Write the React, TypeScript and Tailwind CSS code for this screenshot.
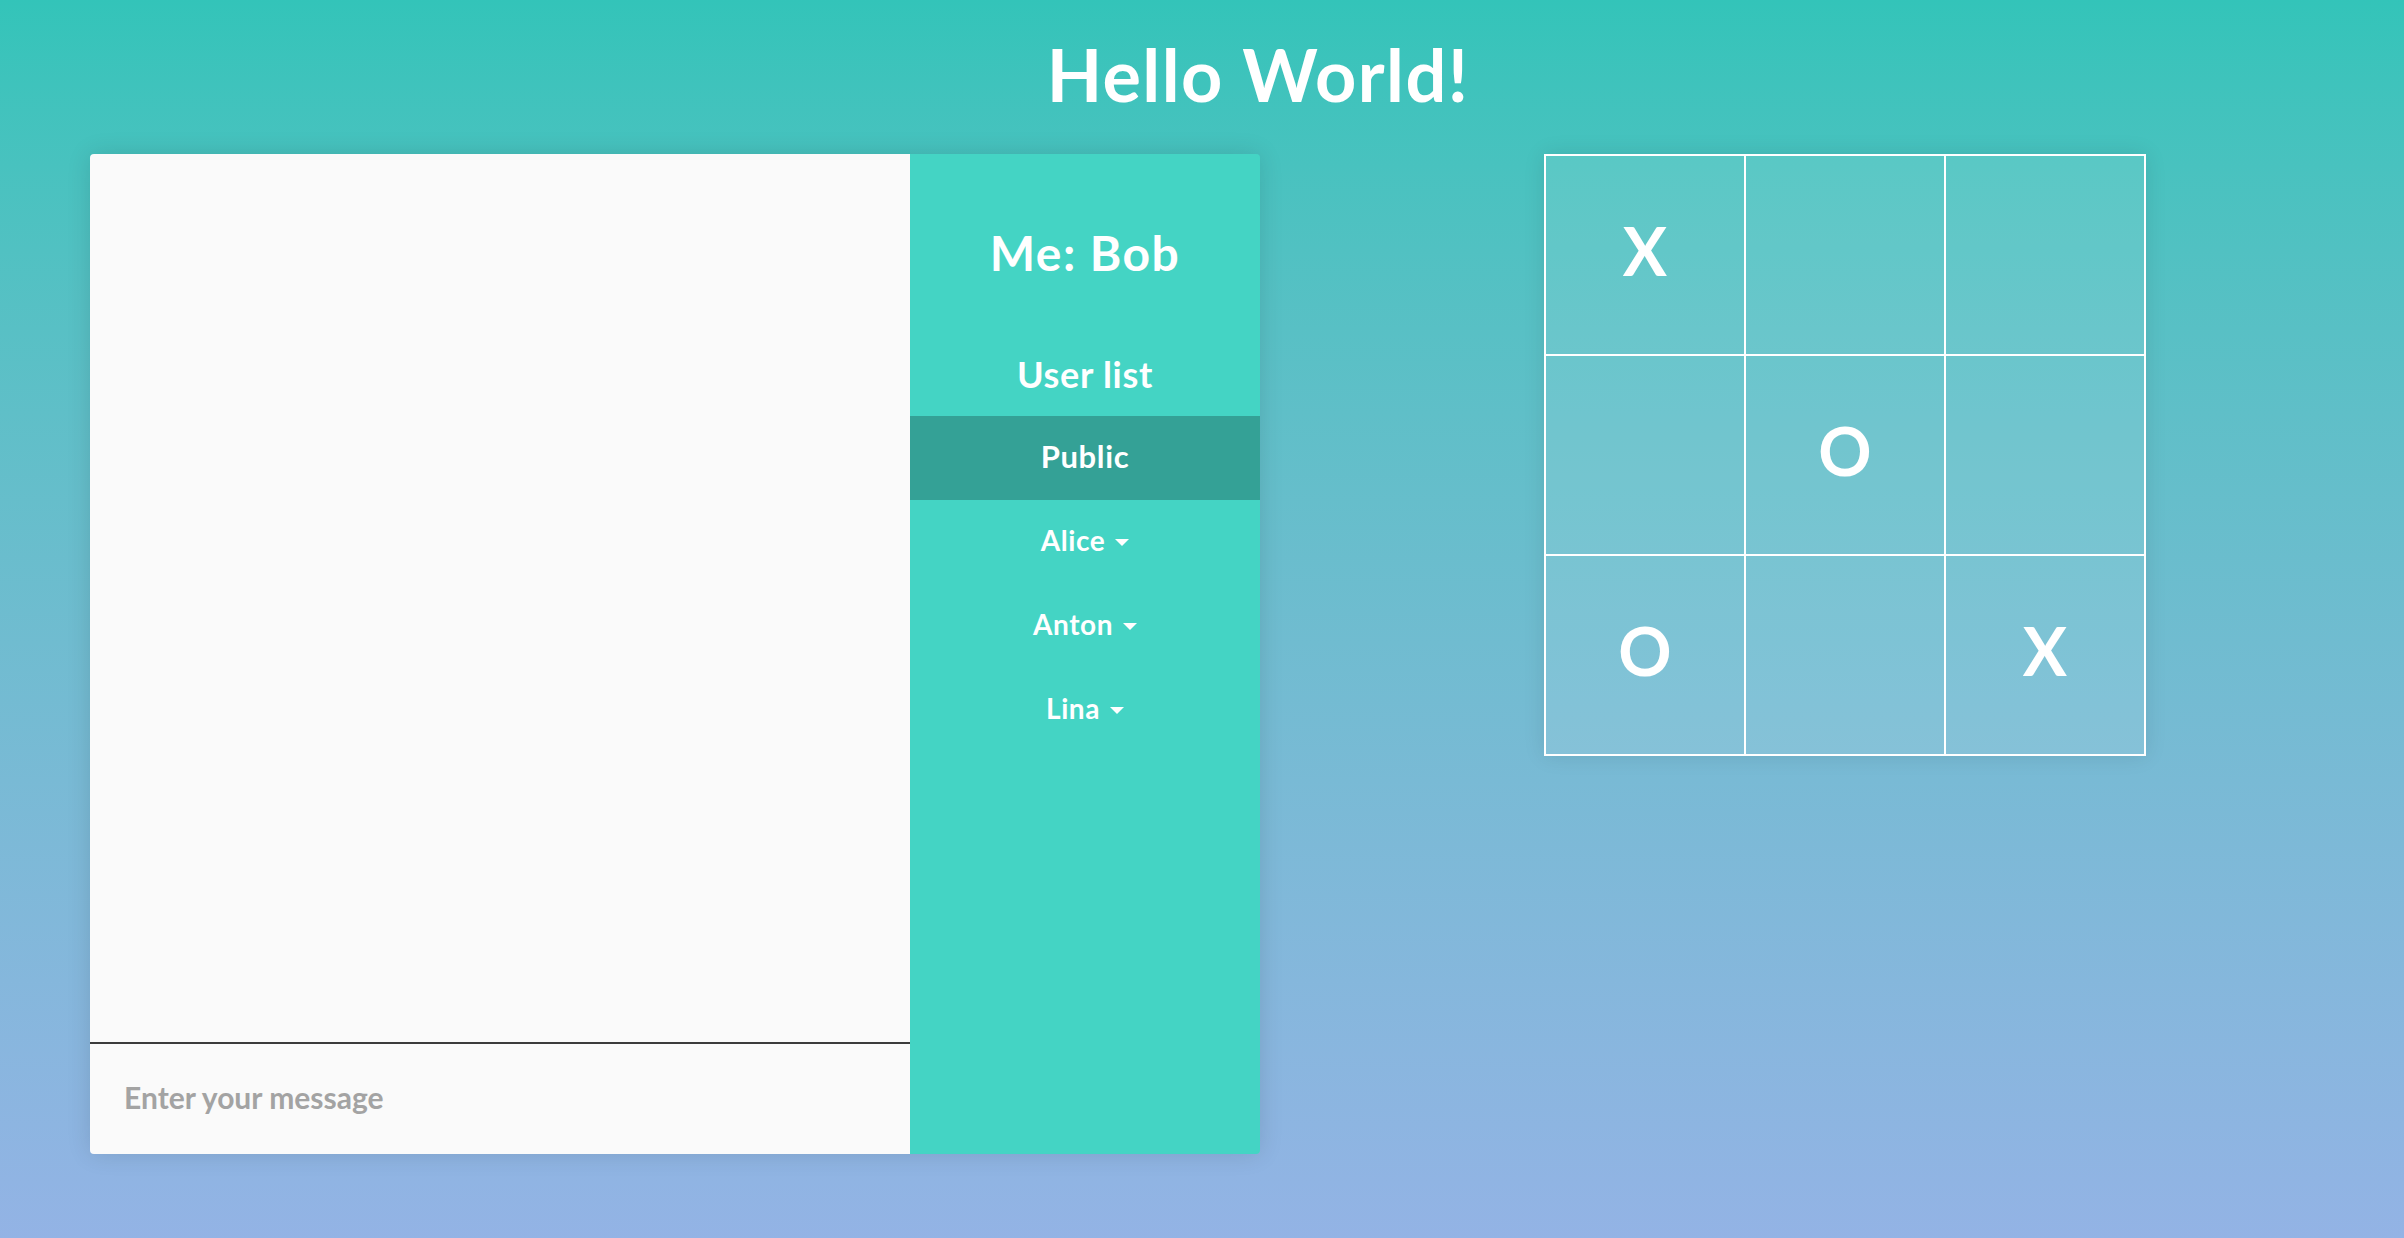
import { useState } from "react";

const users = ["Alice", "Anton", "Lina"];
const board = ["X", "", "", "", "O", "", "O", "", "X"];

export default function App() {
  const [message, setMessage] = useState("");

  return (
    <div
      className="h-[1238px] w-full bg-gradient-to-b from-[#33c4b9] to-[#93b3e5] text-white"
      style={{ fontFamily: "Lato, 'Open Sans', sans-serif" }}
    >
      {/* Header */}
      <div className="h-[154px] flex items-center justify-center pl-[112px] pb-[6px]">
        <h1 className="text-[72px] font-bold leading-none tracking-[0.02em]">Hello World!</h1>
      </div>

      <div className="flex items-start pl-[90px] gap-[284px]">
        {/* Chat */}
        <div className="flex h-[1000px] w-[1170px] rounded-[4px] overflow-hidden shadow-[0_0_24px_rgba(0,0,0,0.12)]">
          <div className="flex flex-col w-[820px] bg-[#fafafa]">
            <div className="flex-1" />
            <div className="h-[112px] border-t-2 border-[#3c3c3c] flex items-center">
              <input
                value={message}
                onChange={(e) => setMessage(e.target.value)}
                placeholder="Enter your message"
                className="w-full h-full bg-transparent px-[34px] pb-[4px] text-[30px] font-bold text-[#444] placeholder:text-[#a3a3a3] outline-none"
              />
            </div>
          </div>

          <div className="w-[350px] bg-[#44d4c4] flex flex-col">
            <div className="h-[202px] flex items-center justify-center pb-[4px]">
              <h2 className="text-[48px] font-bold leading-none tracking-[0.03em]">Me: Bob</h2>
            </div>
            <div className="h-[60px] flex justify-center">
              <h3 className="text-[36px] font-bold leading-[36px] tracking-[0.02em]">User list</h3>
            </div>
            <div className="h-[84px] bg-[#34a196] flex items-center justify-center pb-[4px] text-[31px] font-bold tracking-[0.02em]">
              Public
            </div>
            {users.map((u) => (
              <div key={u} className="h-[84px] flex items-center justify-center gap-[10px] pb-[4px] text-[28px] font-bold tracking-[0.02em]">
                <span>{u}</span>
                <span className="mt-[4px] w-0 h-0 border-x-[7px] border-t-[7px] border-x-transparent border-t-white" />
              </div>
            ))}
          </div>
        </div>

        {/* Board */}
        <div className="grid grid-cols-[repeat(3,200px)] border-t-2 border-l-2 border-white shadow-[0_0_20px_rgba(0,0,0,0.1)]">
          {board.map((c, i) => (
            <div
              key={i}
              className="h-[200px] border-r-2 border-b-2 border-white bg-white/10 flex items-center justify-center pb-[8px] text-[66px] font-bold leading-none"
            >
              {c}
            </div>
          ))}
        </div>
      </div>
    </div>
  );
}
